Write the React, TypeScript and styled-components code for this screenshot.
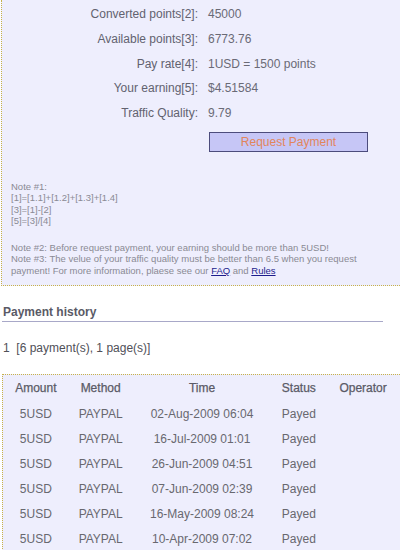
import React from "react";
import styled, { createGlobalStyle } from "styled-components";

const Global = createGlobalStyle`
  html, body { margin: 0; padding: 0; background: #ffffff; }
  body { font-family: "Liberation Sans", Arial, sans-serif; overflow: hidden; }
`;

const Page = styled.div`
  width: 400px;
  height: 550px;
  overflow: hidden;
  display: flex;
  flex-direction: column;
`;

const Panel = styled.div`
  margin-left: 1px;
  background: #eeeefd;
  border-left: 1px dotted #c8b24a;
  border-bottom: 1px dotted #c8b24a;
  padding: 2px 0 9px;
`;

const InfoGrid = styled.div`
  display: grid;
  grid-template-columns: 196px 1fr;
  column-gap: 10px;
  font-size: 12px;
`;

const Label = styled.div`
  text-align: right;
  color: #62626f;
  line-height: 24.75px;
`;

const Value = styled.div`
  color: #6a6a76;
  line-height: 24.75px;
`;

const ButtonRow = styled.div`
  display: flex;
  padding: 6px 0 0 207px;
`;

const RequestButton = styled.button`
  width: 159px;
  height: 20px;
  margin: 0;
  padding: 0;
  background: #c6c6f6;
  border: 1px solid #4c4c7c;
  color: #e2855c;
  font-family: "Liberation Sans", Arial, sans-serif;
  font-size: 12px;
  cursor: pointer;
`;

const Notes = styled.div`
  padding: 29px 0 0 9px;
  font-size: 9.5px;
  line-height: 11.5px;
  color: #8a8a94;
`;

const NoteBlock = styled.div<{ $gap?: number }>`
  margin-top: ${(p) => p.$gap ?? 0}px;
`;

const Link = styled.a`
  color: #1c1c8c;
  text-decoration: underline;
`;

const HistoryTitle = styled.div`
  margin: 19px 17px 0 2px;
  padding: 0 0 2px 1px;
  border-bottom: 1px solid #a8a8c8;
  font-size: 12px;
  font-weight: bold;
  color: #5a5a66;
  line-height: 14px;
`;

const Pager = styled.div`
  margin: 19px 0 0 3px;
  font-size: 12px;
  color: #505058;
  line-height: 14px;
`;

const TablePanel = styled.div`
  margin: 19px 0 0 2px;
  flex: 1;
  background: #eeeefd;
  border-left: 1px dotted #c8b24a;
  border-top: 1px dotted #c8b24a;
`;

const Table = styled.table`
  border-collapse: collapse;
  font-size: 12px;
  color: #68686f;
`;

const Th = styled.th<{ $w: number }>`
  width: ${(p) => p.$w}px;
  padding: 0;
  height: 26px;
  text-align: center;
  font-weight: normal;
  color: #5a5a66;
  -webkit-text-stroke: 0.25px #5a5a66;
`;

const Td = styled.td`
  padding: 0;
  height: 25px;
  text-align: center;
`;

const info: [string, string][] = [
  ["Converted points[2]:", "45000"],
  ["Available points[3]:", "6773.76"],
  ["Pay rate[4]:", "1USD = 1500 points"],
  ["Your earning[5]:", "$4.51584"],
  ["Traffic Quality:", "9.79"],
];

const payments = [
  "02-Aug-2009 06:04",
  "16-Jul-2009 01:01",
  "26-Jun-2009 04:51",
  "07-Jun-2009 02:39",
  "16-May-2009 08:24",
  "10-Apr-2009 07:02",
];

const cols: [string, number][] = [
  ["Amount", 66],
  ["Method", 64],
  ["Time", 140],
  ["Status", 55],
  ["Operator", 74],
];

export default function App() {
  return (
    <Page>
      <Global />
      <Panel>
        <InfoGrid>
          {info.map(([l, v]) => (
            <React.Fragment key={l}>
              <Label>{l}</Label>
              <Value>{v}</Value>
            </React.Fragment>
          ))}
        </InfoGrid>
        <ButtonRow>
          <RequestButton>Request Payment</RequestButton>
        </ButtonRow>
        <Notes>
          <NoteBlock>
            Note #1:
            <br />
            [1]=[1.1]+[1.2]+[1.3]+[1.4]
            <br />
            [3]=[1]-[2]
            <br />
            [5]=[3]/[4]
          </NoteBlock>
          <NoteBlock $gap={15}>
            Note #2: Before request payment, your earning should be more than 5USD!
            <br />
            Note #3: The velue of your traffic quality must be better than 6.5 when you request
            <br />
            payment! For more information, plaese see our <Link href="#">FAQ</Link> and{" "}
            <Link href="#">Rules</Link>
          </NoteBlock>
        </Notes>
      </Panel>
      <HistoryTitle>Payment history</HistoryTitle>
      <Pager>1&nbsp; [6 payment(s), 1 page(s)]</Pager>
      <TablePanel>
        <Table>
          <thead>
            <tr>
              {cols.map(([c, w]) => (
                <Th key={c} $w={w}>
                  {c}
                </Th>
              ))}
            </tr>
          </thead>
          <tbody>
            {payments.map((t) => (
              <tr key={t}>
                <Td>5USD</Td>
                <Td>PAYPAL</Td>
                <Td>{t}</Td>
                <Td>Payed</Td>
                <Td></Td>
              </tr>
            ))}
          </tbody>
        </Table>
      </TablePanel>
    </Page>
  );
}
